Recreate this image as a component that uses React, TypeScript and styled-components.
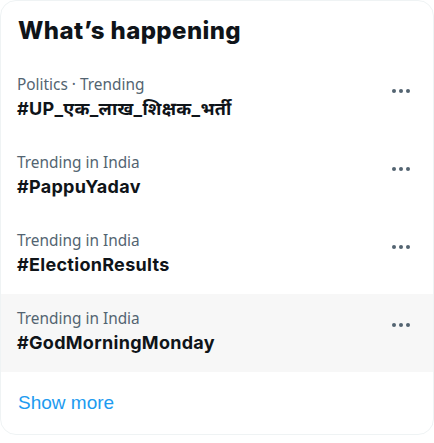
import React, { FC } from "react";
import styled, { createGlobalStyle } from "styled-components";

const COLORS = {
  text: "#0f1419",
  muted: "#536471",
  blue: "#1d9bf0",
  border: "#eff3f4",
  hover: "#f7f7f7",
  white: "#ffffff",
};

interface Trend {
  category: string;
  tag: string;
  active?: boolean;
}

const TRENDS: Trend[] = [
  { category: "Politics · Trending", tag: "#UP_एक_लाख_शिक्षक_भर्ती" },
  { category: "Trending in India", tag: "#PappuYadav" },
  { category: "Trending in India", tag: "#ElectionResults" },
  { category: "Trending in India", tag: "#GodMorningMonday", active: true },
];

const MoreIcon: FC = () => (
  <svg viewBox="0 0 24 24" width="24" height="24" aria-hidden="true">
    <circle cx="5" cy="12" r="2" fill="currentColor" />
    <circle cx="12" cy="12" r="2" fill="currentColor" />
    <circle cx="19" cy="12" r="2" fill="currentColor" />
  </svg>
);

const TrendRow: FC<{ trend: Trend }> = ({ trend }) => (
  <Row $active={trend.active}>
    <RowText>
      <Category>{trend.category}</Category>
      <Tag>{trend.tag}</Tag>
    </RowText>
    <MoreButton type="button" aria-label="More">
      <MoreIcon />
    </MoreButton>
  </Row>
);

export default function App() {
  return (
    <>
      <GlobalStyle />
      <Card>
        <Header>
          <Title>What’s happening</Title>
        </Header>
        {TRENDS.map((trend, i) => (
          <TrendRow key={i} trend={trend} />
        ))}
        <Footer>
          <ShowMore href="#">Show more</ShowMore>
        </Footer>
      </Card>
    </>
  );
}

const GlobalStyle = createGlobalStyle`
  html, body {
    margin: 0;
    padding: 0;
    background: ${COLORS.white};
  }
  * {
    box-sizing: border-box;
  }
`;

const Card = styled.section`
  width: 434px;
  border: 1px solid ${COLORS.border};
  border-radius: 16px;
  overflow: hidden;
  background: ${COLORS.white};
`;

const Header = styled.div`
  padding: 12px 16px 11px 17px;
`;

const Title = styled.h2`
  margin: 0;
  font-family: Inter, "Noto Sans", sans-serif;
  font-weight: 800;
  font-size: 24px;
  line-height: 36px;
  color: ${COLORS.text};
  letter-spacing: 0.4px;
`;

const Row = styled.div<{ $active?: boolean }>`
  display: flex;
  align-items: flex-start;
  justify-content: space-between;
  height: 78px;
  padding: 15px 20px 17px 16px;
  background: ${({ $active }) => ($active ? COLORS.hover : "transparent")};
`;

const RowText = styled.div`
  display: flex;
  flex-direction: column;
  gap: 2px;
`;

const Category = styled.span`
  font-family: "Noto Sans", "Open Sans", sans-serif;
  font-size: 15.4px;
  line-height: 20px;
  color: ${COLORS.muted};
`;

const Tag = styled.span`
  font-family: Inter, "Noto Sans", sans-serif;
  font-weight: 700;
  font-size: 18px;
  line-height: 24px;
  letter-spacing: 0.3px;
  color: ${COLORS.text};
`;

const MoreButton = styled.button`
  display: flex;
  margin-top: 4px;
  padding: 0;
  border: 0;
  background: none;
  color: ${COLORS.muted};
  cursor: pointer;
`;

const Footer = styled.div`
  padding: 16px 16px 16px 17px;
`;

const ShowMore = styled.a`
  font-family: "Liberation Sans", Arial, sans-serif;
  font-size: 19px;
  line-height: 30px;
  color: ${COLORS.blue};
  text-decoration: none;
`;
